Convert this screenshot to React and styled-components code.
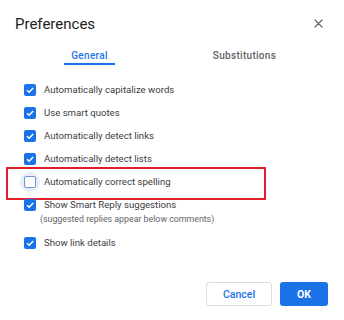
import React, { useState } from "react";
import styled, { createGlobalStyle, css } from "styled-components";

const GlobalStyle = createGlobalStyle`
  html, body {
    margin: 0;
    padding: 0;
    background: #fff;
  }
  * {
    box-sizing: border-box;
  }
`;

const options = [
  { id: "capitalize", label: "Automatically capitalize words", checked: true },
  { id: "quotes", label: "Use smart quotes", checked: true },
  { id: "links", label: "Automatically detect links", checked: true },
  { id: "lists", label: "Automatically detect lists", checked: true },
  {
    id: "spelling",
    label: "Automatically correct spelling",
    checked: false,
    focused: true,
    highlighted: true,
  },
  {
    id: "smartReply",
    label: "Show Smart Reply suggestions",
    checked: true,
    note: "(suggested replies appear below comments)",
  },
  { id: "linkDetails", label: "Show link details", checked: true },
];

export default function App() {
  const [tab, setTab] = useState("general");
  const [values, setValues] = useState(
    Object.fromEntries(options.map((o) => [o.id, o.checked]))
  );

  const toggle = (id) => setValues((prev) => ({ ...prev, [id]: !prev[id] }));

  return (
    <>
      <GlobalStyle />
      <Dialog>
        <Header>
          <Title>Preferences</Title>
          <CloseButton aria-label="Close">
            <svg width="9" height="9" viewBox="0 0 9 9">
              <path
                d="M1 1L8 8M8 1L1 8"
                stroke="#5f6368"
                strokeWidth="1.2"
                strokeLinecap="round"
              />
            </svg>
          </CloseButton>
        </Header>

        <Tabs>
          <Tab onClick={() => setTab("general")}>
            <TabLabel $active={tab === "general"}>General</TabLabel>
          </Tab>
          <Tab onClick={() => setTab("substitutions")}>
            <TabLabel $active={tab === "substitutions"}>Substitutions</TabLabel>
          </Tab>
        </Tabs>

        <OptionList>
          {options.map((option) => (
            <OptionItem key={option.id}>
              <Row
                $highlighted={option.highlighted}
                onClick={() => toggle(option.id)}
              >
                <BoxWrap $focused={option.focused}>
                  <Box $checked={values[option.id]}>
                    {values[option.id] && (
                      <svg width="10" height="10" viewBox="0 0 10 10">
                        <path
                          d="M2 5.2L4.1 7.2L8.2 2.9"
                          fill="none"
                          stroke="#fff"
                          strokeWidth="1.5"
                        />
                      </svg>
                    )}
                  </Box>
                </BoxWrap>
                <Label>{option.label}</Label>
              </Row>
              {option.note && <Note>{option.note}</Note>}
            </OptionItem>
          ))}
        </OptionList>

        <Footer>
          <CancelButton>Cancel</CancelButton>
          <OkButton>OK</OkButton>
        </Footer>
      </Dialog>
    </>
  );
}

const Dialog = styled.div`
  width: 344px;
  height: 320px;
  display: flex;
  flex-direction: column;
  font-family: Roboto, "Liberation Sans", Arial, sans-serif;
  background: #fff;
`;

const Header = styled.div`
  display: flex;
  align-items: center;
  justify-content: space-between;
  padding: 14px 21px 0 15px;
  height: 34px;
`;

const Title = styled.h1`
  margin: 0;
  font-size: 15px;
  line-height: 20px;
  font-weight: 400;
  color: #202124;
`;

const CloseButton = styled.button`
  border: none;
  background: none;
  padding: 0;
  margin-top: -2px;
  width: 9px;
  height: 9px;
  display: flex;
  cursor: pointer;
`;

const Tabs = styled.div`
  display: grid;
  grid-template-columns: 1fr 1fr;
  padding: 0 22px 0 12px;
`;

const Tab = styled.div`
  display: flex;
  justify-content: center;
  padding-top: 15px;
  cursor: pointer;
`;

const TabLabel = styled.span`
  font-size: 10px;
  line-height: 14px;
  font-weight: 500;
  letter-spacing: 0.3px;
  padding: 0 7px 0;
  color: #5f6368;
  border-bottom: 2px solid transparent;
  ${(p) =>
    p.$active &&
    css`
      color: #1a73e8;
      border-bottom-color: #1a73e8;
    `}
`;

const OptionList = styled.div`
  display: flex;
  flex-direction: column;
  margin-top: 13px;
`;

const OptionItem = styled.div`
  display: flex;
  flex-direction: column;
`;

const Row = styled.div`
  position: relative;
  display: flex;
  align-items: center;
  height: 23px;
  padding-left: 20px;
  cursor: pointer;
  ${(p) =>
    p.$highlighted &&
    css`
      &::after {
        content: "";
        position: absolute;
        left: 6px;
        top: -3px;
        width: 256px;
        height: 29px;
        border: 2px solid #e2202a;
        pointer-events: none;
      }
    `}
`;

const BoxWrap = styled.span`
  width: 20px;
  height: 20px;
  border-radius: 50%;
  display: flex;
  align-items: center;
  justify-content: center;
  margin-right: 4px;
  background: ${(p) => (p.$focused ? "#e6eefb" : "transparent")};
`;

const Box = styled.span`
  width: 12px;
  height: 12px;
  border-radius: 2px;
  display: flex;
  align-items: center;
  justify-content: center;
  ${(p) =>
    p.$checked
      ? css`
          background: #1a73e8;
        `
      : css`
          border: 1.5px solid #6f93cf;
          background: #fff;
        `}
`;

const Label = styled.span`
  font-size: 9.6px;
  color: #3c4043;
  white-space: nowrap;
`;

const Note = styled.div`
  margin: -3px 0 6px 40px;
  font-size: 8.8px;
  line-height: 12px;
  color: #5f6368;
`;

const Footer = styled.div`
  margin-top: auto;
  display: flex;
  justify-content: flex-end;
  gap: 8px;
  padding: 0 16px 14px 0;
`;

const ButtonBase = styled.button`
  height: 24px;
  border-radius: 3px;
  font-family: Roboto, "Liberation Sans", Arial, sans-serif;
  font-size: 10.5px;
  font-weight: 500;
  cursor: pointer;
`;

const CancelButton = styled(ButtonBase)`
  width: 66px;
  background: #fff;
  border: 1px solid #dadce0;
  color: #1a73e8;
`;

const OkButton = styled(ButtonBase)`
  width: 48px;
  background: #1a73e8;
  border: none;
  color: #fff;
  font-weight: 700;
`;
